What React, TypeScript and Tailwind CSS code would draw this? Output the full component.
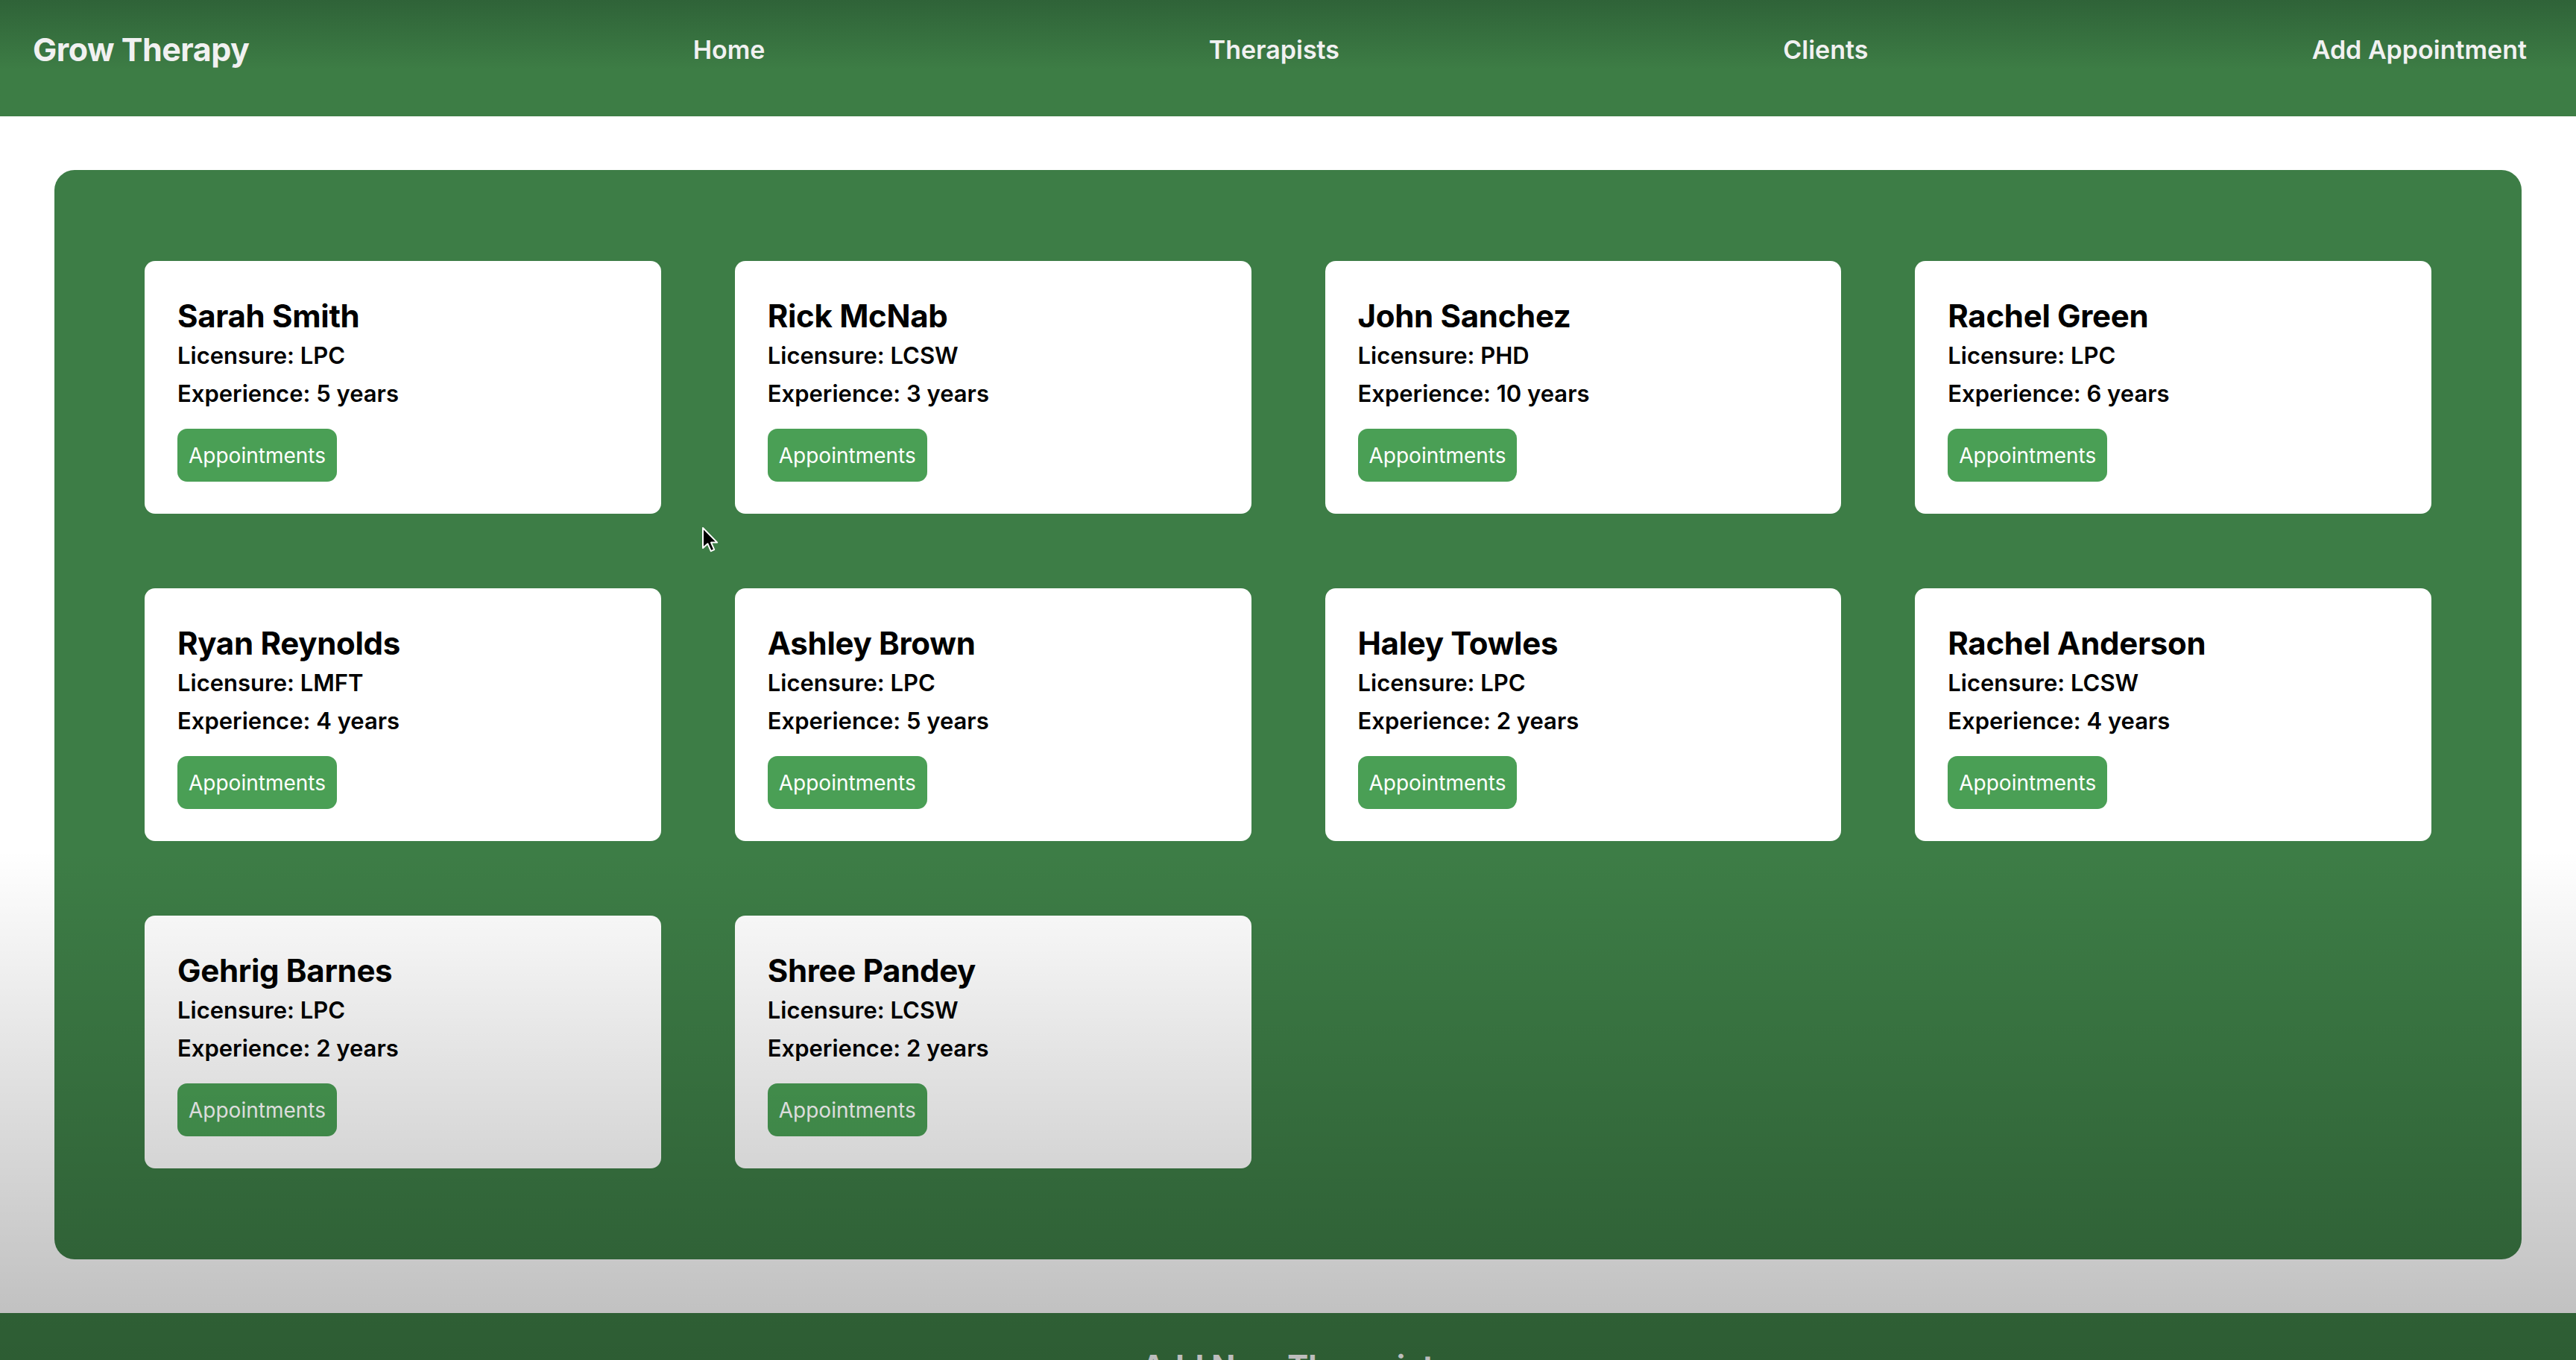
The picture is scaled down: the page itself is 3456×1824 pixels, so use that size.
const therapists = [
  { name: "Sarah Smith", license: "LPC", years: 5 },
  { name: "Rick McNab", license: "LCSW", years: 3 },
  { name: "John Sanchez", license: "PHD", years: 10 },
  { name: "Rachel Green", license: "LPC", years: 6 },
  { name: "Ryan Reynolds", license: "LMFT", years: 4 },
  { name: "Ashley Brown", license: "LPC", years: 5 },
  { name: "Haley Towles", license: "LPC", years: 2 },
  { name: "Rachel Anderson", license: "LCSW", years: 4 },
  { name: "Gehrig Barnes", license: "LPC", years: 2 },
  { name: "Shree Pandey", license: "LCSW", years: 2 },
];

const TherapistCard = ({ t }: any) => {
  return (
    <div className="bg-white rounded-[14px] pt-[50px] px-[44px] pb-[43px] h-[339px]">
      <p className="text-[42px] leading-[48px] font-bold text-black tracking-[-0.3px]">{t.name}</p>
      <p className="mt-[3px] text-[31px] leading-[52px] font-semibold text-black">
        Licensure: {t.license}
      </p>
      <p className="text-[31px] leading-[50px] font-semibold text-black">
        Experience: {t.years} years
      </p>
      <button className="mt-[22px] h-[71px] px-[15px] rounded-[13px] bg-[#4a9f55] text-white text-[28px] font-normal">
        Appointments
      </button>
    </div>
  );
};

const Cursor = () => (
  <svg
    className="absolute left-[941px] top-[706px] pointer-events-none"
    width="24"
    height="36"
    viewBox="0 0 12 18"
  >
    <path
      d="M1 1 L1 14.5 L4.2 11.6 L6.4 16.6 L8.6 15.6 L6.5 10.8 L10.6 10.8 Z"
      fill="#000"
      stroke="#fff"
      strokeWidth="1"
      strokeLinejoin="round"
    />
  </svg>
);

export default function App() {
  return (
    <div
      className="relative h-[1824px] overflow-hidden bg-white"
      style={{ fontFamily: "Inter, 'Noto Sans', sans-serif" }}
    >
      <header className="h-[156px] bg-gradient-to-b from-[#2f6338] to-[#3d7d45] to-[60%] pt-[41px] pl-[44px] pr-[66px]">
        <nav className="h-[50px] flex items-center justify-between text-[#f1f1f1]">
          <span className="text-[43px] font-bold tracking-[-0.5px]">Grow Therapy</span>
          <a className="text-[34px] font-semibold">Home</a>
          <a className="text-[34px] font-semibold">Therapists</a>
          <a className="text-[34px] font-semibold">Clients</a>
          <a className="text-[34px] font-semibold">Add Appointment</a>
        </nav>
      </header>

      <main className="px-[73px] py-[72px]">
        <section className="bg-[#3d7d46] rounded-[27px] pt-[122px] pb-[122px] px-[121px]">
          <div className="grid grid-cols-4 gap-x-[99px] gap-y-[100px]">
            {therapists.map((t) => (
              <TherapistCard key={t.name} t={t} />
            ))}
          </div>
        </section>
      </main>

      <footer className="bg-[#3d7d45] pt-[47px] pb-[60px] flex justify-center">
        <h2 className="text-[42px] leading-[1.2] font-bold text-white">Add New Therapist</h2>
      </footer>

      {/* video fade over the lower part */}
      <div className="absolute inset-0 pointer-events-none bg-[linear-gradient(to_bottom,transparent_0px,transparent_1140px,rgba(0,0,0,0.235)_1741px,rgba(0,0,0,0.26)_1824px)]" />
      <Cursor />
    </div>
  );
}
